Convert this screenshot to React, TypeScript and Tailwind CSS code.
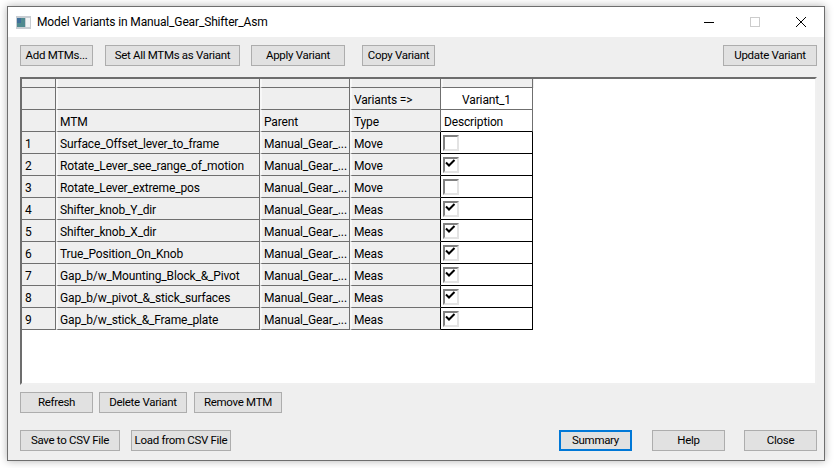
const rows = [
  ["1", "Surface_Offset_lever_to_frame", "Move", false],
  ["2", "Rotate_Lever_see_range_of_motion", "Move", true],
  ["3", "Rotate_Lever_extreme_pos", "Move", false],
  ["4", "Shifter_knob_Y_dir", "Meas", true],
  ["5", "Shifter_knob_X_dir", "Meas", true],
  ["6", "True_Position_On_Knob", "Meas", true],
  ["7", "Gap_b/w_Mounting_Block_&_Pivot", "Meas", true],
  ["8", "Gap_b/w_pivot_&_stick_surfaces", "Meas", true],
  ["9", "Gap_b/w_stick_&_Frame_plate", "Meas", true],
] as const;

function Btn({ w, label, primary }: { w: string; label: string; primary?: boolean }) {
  return (
    <button
      className={
        w +
        " h-[21px] shrink-0 whitespace-nowrap flex items-center justify-center bg-[#e1e1e1] text-[#000] text-[11.5px] tracking-[-0.3px] " +
        (primary ? "border-2 border-[#0078d7]" : "border border-[#adadad]")
      }
    >
      {label}
    </button>
  );
}

function Cell({ w, children, className = "" }: { w: string; children?: React.ReactNode; className?: string }) {
  return (
    <div className={w + " h-full shrink-0 flex items-center overflow-hidden whitespace-nowrap pt-[2px] tracking-[-0.15px] border-r border-b border-[#6f6f6f] " + className}>
      {children}
    </div>
  );
}

function Check({ on }: { on: boolean }) {
  return (
    <div className="w-[16px] h-[16px] bg-white border-2 border-t-[#808080] border-l-[#808080] border-r-[#e3e3e3] border-b-[#e3e3e3] flex items-start justify-start">
      {on && (
        <svg width="11" height="10" viewBox="0 0 11 10" className="block">
          <path d="M1 3.5 L4 6.5 L9.5 1" fill="none" stroke="#000" strokeWidth="2" />
        </svg>
      )}
    </div>
  );
}

const L = "border-l-[2px] border-l-[#f8f8f8]";

export default function App() {
  return (
    <div className="w-[835px] h-[468px] bg-white overflow-hidden pt-[6px] pl-[7px]" style={{ fontFamily: 'Roboto, sans-serif' }}>
      <div className="w-[818px] h-[455px] border border-[#6e6e6e] bg-[#efefef] shadow-[0_0_8px_rgba(0,0,0,0.3)] flex flex-col text-[12px] text-[#000]">
        <div className="h-[30px] bg-white flex items-center shrink-0 pl-[8px]">
          <svg width="15" height="13" viewBox="0 0 15 13" className="mr-[6px] shrink-0">
            <rect x="0" y="0" width="15" height="13" fill="#c8cdd2" />
            <rect x="1" y="2" width="8" height="9" fill="#4f8a8f" />
            <rect x="1" y="2" width="4" height="5" fill="#3f6f9a" />
            <rect x="10" y="2" width="4" height="9" fill="#f2f4f5" />
          </svg>
          <span className="tracking-[-0.15px]">Model Variants in Manual_Gear_Shifter_Asm</span>
          <div className="ml-auto flex items-center">
            <svg width="12" height="12" viewBox="0 0 12 12" className="mr-[34px]"><path d="M1 6.5H11" stroke="#000" /></svg>
            <svg width="12" height="12" viewBox="0 0 12 12" className="mr-[34px]"><rect x="1.5" y="1.5" width="9" height="9" fill="none" stroke="#ccc" /></svg>
            <svg width="12" height="12" viewBox="0 0 12 12" className="mr-[17px]"><path d="M1 1L11 11M11 1L1 11" stroke="#000" /></svg>
          </div>
        </div>

        <div className="flex-1 flex flex-col pl-[12px] pr-[7px] pt-[8px]">
          <div className="flex h-[21px]">
            <Btn w="w-[73px]" label="Add MTMs..." />
            <div className="w-[12px]" />
            <Btn w="w-[135px]" label="Set All MTMs as Variant" />
            <div className="w-[11px]" />
            <Btn w="w-[94px]" label="Apply Variant" />
            <div className="w-[17px]" />
            <Btn w="w-[73px]" label="Copy Variant" />
            <Btn w="w-[94px] ml-auto" label="Update Variant" />
          </div>

          <div className="mt-[11px] h-[308px] w-[797px] bg-white border-2 border-t-[#6d6d6d] border-l-[#6d6d6d] border-r-[#f0f0f0] border-b-[#f0f0f0]">
            <div className="flex h-[9px] bg-[#efefef] w-[512px]">
              <Cell w="w-[34px]" />
              <Cell w={"w-[204px] " + L} />
              <Cell w={"w-[90px] " + L} />
              <Cell w={"w-[91px] " + L} />
              <Cell w={"w-[92px] " + L} />
            </div>
            <div className="flex h-[22px] w-[512px]">
              <Cell w="w-[34px] bg-[#efefef]" />
              <Cell w={"w-[204px] bg-[#efefef] " + L} />
              <Cell w={"w-[90px] bg-[#efefef] " + L} />
              <Cell w={"w-[91px] bg-[#efefef] pl-[2px] " + L}>{"Variants =>"}</Cell>
              <Cell w="w-[92px] bg-white justify-center">Variant_1</Cell>
            </div>
            <div className="flex h-[22px] w-[512px]">
              <Cell w="w-[34px] bg-[#efefef]" />
              <Cell w={"w-[204px] bg-[#efefef] pl-[2px] " + L}>MTM</Cell>
              <Cell w={"w-[90px] bg-[#efefef] pl-[2px] " + L}>Parent</Cell>
              <Cell w={"w-[91px] bg-[#efefef] pl-[2px] " + L}>Type</Cell>
              <Cell w="w-[92px] bg-white pl-[3px] !border-b-black">Description</Cell>
            </div>
            {rows.map(([n, name, type, on]) => (
              <div key={n} className="flex h-[22px] w-[512px]">
                <Cell w="w-[34px] bg-[#efefef] pl-[3px]">{n}</Cell>
                <Cell w={"w-[204px] bg-[#efefef] pl-[2px] " + L}>{name}</Cell>
                <Cell w={"w-[90px] bg-[#efefef] pl-[2px] " + L}>Manual_Gear_...</Cell>
                <Cell w={"w-[91px] bg-[#efefef] pl-[2px] !border-r-black " + L}>{type}</Cell>
                <Cell w="w-[92px] bg-white pl-[2px] !pt-0 !border-r-black !border-b-black"><Check on={on} /></Cell>
              </div>
            ))}
          </div>

          <div className="flex mt-[7px]">
            <Btn w="w-[73px]" label="Refresh" />
            <div className="w-[6px]" />
            <Btn w="w-[88px]" label="Delete Variant" />
            <div className="w-[7px]" />
            <Btn w="w-[88px]" label="Remove MTM" />
          </div>
          <div className="flex mt-[17px]">
            <Btn w="w-[100px]" label="Save to CSV File" />
            <div className="w-[11px]" />
            <Btn w="w-[100px]" label="Load from CSV File" />
            <Btn w="w-[73px] ml-auto" label="Summary" primary />
            <div className="w-[20px]" />
            <Btn w="w-[73px]" label="Help" />
            <div className="w-[19px]" />
            <Btn w="w-[73px]" label="Close" />
          </div>
        </div>
      </div>
    </div>
  );
}
